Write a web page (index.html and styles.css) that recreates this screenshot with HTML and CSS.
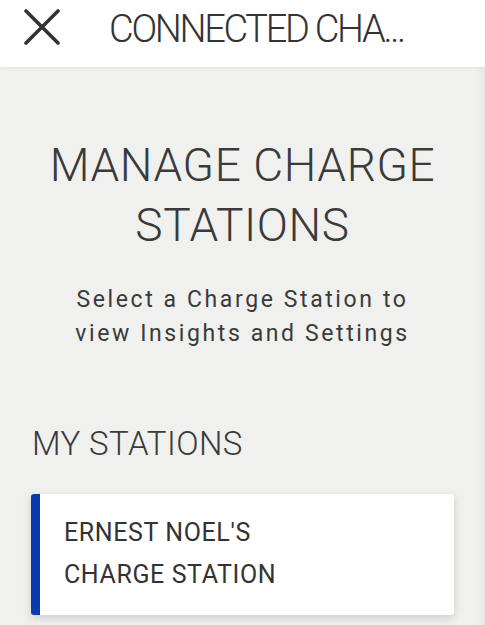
FILE: index.html
```html
<!DOCTYPE html>
<html lang="en">
<head>
<meta charset="utf-8">
<title>Connected Charge Station</title>
<link rel="stylesheet" href="styles.css">
</head>
<body>
<header class="topbar">
  <svg class="close-icon" width="36" height="36" viewBox="0 0 36 36" aria-hidden="true">
    <path d="M2 2 L34 34 M34 2 L2 34" stroke="#333" stroke-width="3.6" stroke-linecap="round" fill="none"/>
  </svg>
  <h1 class="topbar-title">CONNECTED CHA...</h1>
</header>
<main class="content">
  <h2 class="page-title">MANAGE CHARGE<br>STATIONS</h2>
  <p class="subtitle">Select a Charge Station to<br>view Insights and Settings</p>
  <h3 class="section-title">MY STATIONS</h3>
  <div class="station-card">
    <div class="station-name">ERNEST NOEL'S<br>CHARGE STATION</div>
  </div>
</main>
</body>
</html>
```
FILE: styles.css
```css
html, body {
  margin: 0;
  padding: 0;
  height: 100%;
}
body {
  font-family: Roboto, "Liberation Sans", sans-serif;
  color: #333;
  background: #f0f0ef;
  overflow: hidden;
  display: flex;
  flex-direction: column;
}
.topbar {
  height: 67px;
  box-sizing: border-box;
  background: #fff;
  display: flex;
  align-items: flex-start;
  padding: 7px 0 0 24px;
  position: relative;
  z-index: 1;
  box-shadow: 0 1px 4px rgba(0,0,0,0.06);
}
.close-icon {
  margin-top: 2px;
  flex: none;
}
.topbar-title {
  margin: 0 0 0 49px;
  font-weight: 300;
  font-size: 38px;
  line-height: 44px;
  letter-spacing: -2.3px;
  color: #333;
  white-space: nowrap;
}
.content {
  flex: 1;
  padding: 68px 31px 0 31px;
  box-shadow: inset -10px 0 10px -8px rgba(0,0,0,0.06);
}
.page-title {
  margin: 0;
  text-align: center;
  font-weight: 300;
  font-size: 46px;
  line-height: 60px;
  letter-spacing: 0.6px;
  color: #3a3a3a;
}
.subtitle {
  margin: 28px 0 0 0;
  text-align: center;
  font-weight: 400;
  font-size: 23px;
  line-height: 34px;
  letter-spacing: 2.6px;
  color: #3a3a3a;
}
.section-title {
  margin: 73px 0 0 1px;
  font-weight: 300;
  font-size: 33px;
  line-height: 40px;
  letter-spacing: 0.4px;
  color: #3a3a3a;
}
.station-card {
  margin-top: 30px;
  width: 423px;
  height: 121px;
  box-sizing: border-box;
  background: #fff;
  border-left: 9px solid #0a3ab0;
  border-radius: 3px;
  box-shadow: 0 3px 8px rgba(0,0,0,0.15);
  padding: 18px 0 0 24px;
}
.station-name {
  font-weight: 400;
  font-size: 25px;
  line-height: 42px;
  letter-spacing: 0.6px;
  color: #333;
}
```
